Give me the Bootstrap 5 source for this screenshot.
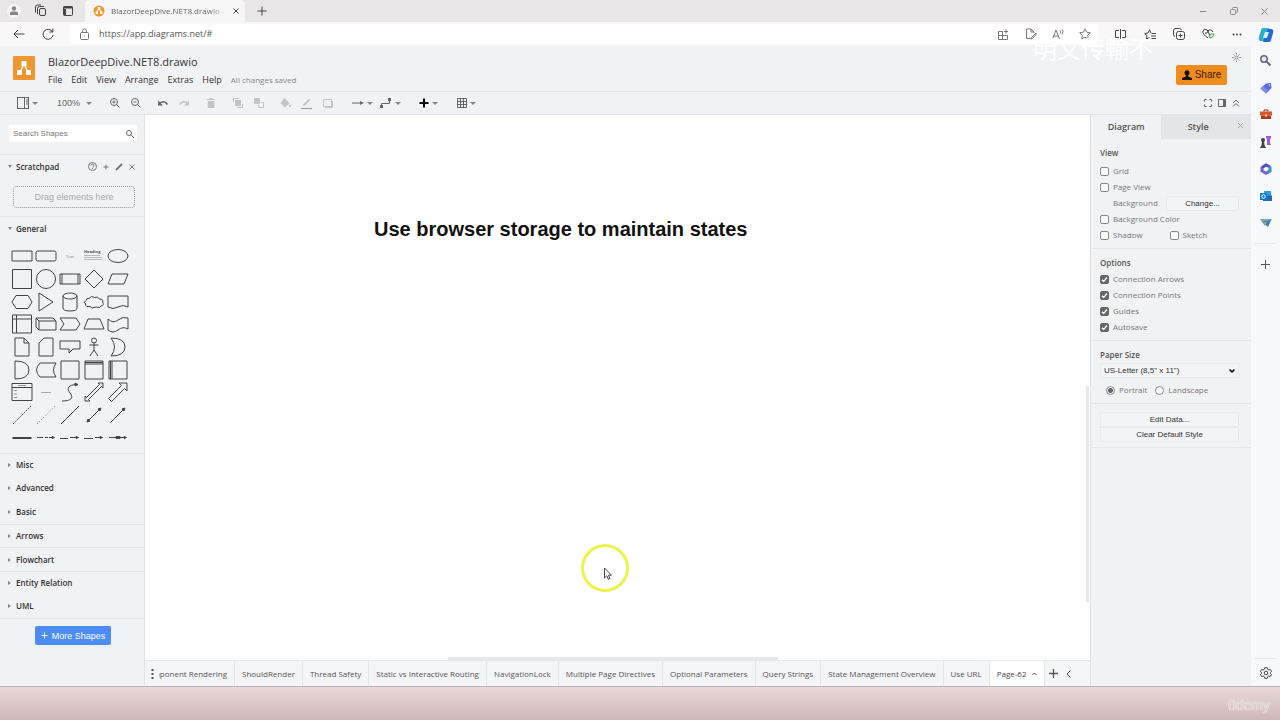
<!DOCTYPE html>
<html lang="en">
<head>
<meta charset="utf-8">
<meta name="viewport" content="width=device-width, initial-scale=1">
<title>BlazorDeepDive.NET8.drawio</title>
<link href="https://cdn.jsdelivr.net/npm/bootstrap@5.3.0/dist/css/bootstrap.min.css" rel="stylesheet">
<style>
  body { font-family: "Open Sans", "Noto Sans", sans-serif; font-size: 8px; line-height: 12px; color: #555; background: #f1f2f4; height: 100vh; overflow: hidden; }
  button, input, select { font: inherit; color: inherit; }
  button { background: none; border: 0; padding: 0; }
  a { color: inherit; text-decoration: none; }
  svg { display: block; flex: none; overflow: visible; }
  svg:not([fill]) { fill: none; }
  svg:not([stroke]) { stroke: currentColor; }
  .arial { font-family: "Liberation Sans", Arial, sans-serif; }
  .ico { display: flex; align-items: center; justify-content: center; flex: none; }
  .rule { border-top: 1px solid #e4e6e8; }
  .shrinkable { min-width: 0; min-height: 0; }

  /* browser chrome */
  .titlebar { height: 22px; background: #e9e6e7; color: #444; }
  .titlebar .ico { width: 27px; height: 22px; }
  .webtab { width: 160px; padding: 0 6px 0 8px; background: #f7f6f7; border-radius: 5px 5px 0 0; gap: 6px; }
  .webtab-name { overflow: hidden; white-space: nowrap; color: #666; -webkit-mask-image: linear-gradient(90deg, #000 85%, transparent); }
  .newtab { margin-left: 3px; }
  .winctl .ico { width: 31px; color: #888; }
  .addressbar { height: 24px; background: #f8f8f9; color: #444; }
  .addressbar .ico { width: 29px; }
  .urlbox { background: #fff; border-radius: 4px; height: 20px; padding-left: 10px; }
  .urlbox .ico { width: 27px; color: #777; }
  .urlbox input { border: 0; background: none; outline: 0; font-size: 9px; color: #555; padding: 0 0 0 10px; }
  .edgebar { width: 29px; background: #f7f8fa; }
  .edgebar .ico { height: 27px; }
  .edgebar .ico:first-child { height: 25px; }
  .edgebar hr { margin: 7px 4px; border-color: #aaa; }

  /* editor header */
  .apphead { padding: 7px 24px 0 13px; height: 45px; }
  .applogo { width: 22px; height: 24px; margin: 3px 13px 0 0; background: #ee962f; border-radius: 1px; }
  .docname { font-size: 11px; line-height: 17px; color: #333; }
  .menus { gap: 9px; font-size: 9px; line-height: 20px; color: #333; }
  .savedstate { font-size: 8px; color: #888; }
  .share { background: #f08c1e; color: #40200a; font-size: 10px; width: 51px; height: 20px; margin-top: 12px; border-radius: 2px; gap: 3px; }
  .daylight { margin: 0 -14px 0 5px; }
  .watermark { position: absolute; right: 98px; top: 16px; font: 24px/24px "Liberation Sans", "Noto Sans CJK SC", sans-serif; color: #fff; pointer-events: none; }
  .toolbar { height: 24px; padding: 0 8px 0 13px; gap: 6px; color: #666; border-bottom: 1px solid #e2e4e7; }
  .tool { width: 21px; height: 22px; }
  .tooldrop { width: 28px; height: 22px; gap: 3px; }
  .tool-narrow { width: 14px; }
  .zoomlevel { margin: 0 6px 0 10px; gap: 6px; font-size: 9px; }
  .off { color: #c4c4c6; }
  .caret { width: 0; border: 3px solid transparent; border-top-color: #888; border-bottom: 0; }

  /* shapes sidebar */
  .shapes { width: 145px; border-right: 1px solid #e2e4e7; color: #333; }
  .searchbox { margin: 10px 7px 12px 9px; height: 17px; background: #fff; border-radius: 2px; padding: 0 3px 0 4px; }
  .searchbox input { border: 0; outline: 0; background: none; width: 100px; padding: 0; }
  .searchbox input::placeholder { color: #777; opacity: 1; }
  .sect { height: 24px; padding: 0 6px 0 8px; font-weight: 600; gap: 3px; color: #333; }
  .sect .ico { width: 13px; color: #777; }
  .tri-down, .tri-right { width: 5px; flex: none; }
  .tri-down::before { content: ""; display: block; border: 2px solid transparent; border-top: 3px solid #888; border-bottom: 0; width: 0; }
  .tri-right::before { content: ""; display: block; border: 2px solid transparent; border-left: 3px solid #888; border-right: 0; width: 0; }
  .dropzone { margin: 8px 9px 8px 13px; height: 22px; border: 1px dotted #999; border-radius: 4px; color: #aaa; font-size: 9px; }
  .palette { display: grid; grid-template-columns: repeat(5, 24px); grid-template-rows: repeat(9, 1fr); height: 204px; margin: 5px 0 4px 10px; color: #444; }
  .cats { display: grid; grid-template-rows: repeat(7, 1fr); height: 165px; }
  .more { background: #4d8bf5; color: #fff; font-size: 9px; width: 76px; height: 19px; border-radius: 2px; margin: 7px 0 0 35px; }

  /* drawing canvas */
  .drawing { background: #fff; }
  .headline { position: absolute; left: 229px; top: 102px; font-size: 20px; line-height: 24px; font-weight: 700; color: #111; white-space: nowrap; }
  .pointer { position: absolute; left: 435px; top: 428px; }
  .vbar { position: absolute; right: 1px; top: 271px; width: 3px; height: 216px; background: #e6e7e9; }
  .hbar { position: absolute; left: 303px; bottom: 0; width: 330px; height: 3px; background: #e6e7e9; }
  .pages { height: 26px; border-top: 1px solid #e6e8ea; background: #f4f5f6; color: #555; }
  .pagetab { padding: 0 7px; border-right: 1px solid #e3e5e7; white-space: nowrap; height: 25px; flex: none; display: flex; align-items: center; }
  .pagetab-cut { width: 76px; padding-left: 0; margin-left: 3px; }
  .pagetab-cut span { overflow: hidden; display: flex; justify-content: flex-end; }
  .pagetab-on { background: #fff; gap: 5px; color: #444; }

  /* format panel */
  .format { width: 161px; border-left: 1px solid #dfe1e4; color: #777; }
  .ftab { height: 24px; font-size: 9px; font-weight: 600; color: #555; }
  .ftab-on { width: 44%; }
  .ftab-off { background: #e4e5e7; }
  .fsec { padding: 6px 12px 5px 9px; border-bottom: 1px solid #e4e6e8; }
  .fsec-actions { padding-top: 8px; }
  .fsec h2 { font-size: 8px; line-height: 16px; font-weight: 600; margin: 0; color: #555; }
  .fsec .viewhead { margin-bottom: 2px; }
  .frow { height: 16px; gap: 4px; }
  .frow label { line-height: 16px; }
  .indent { padding-left: 13px; }
  .orient { margin-top: 4px; padding-left: 6px; }
  .frow input[type=checkbox] { appearance: none; width: 9px; height: 9px; border: 1px solid #888; border-radius: 2px; background: #fff; margin: 0; }
  .frow input[type=checkbox]:checked { border-color: #666; background: #666 url("data:image/svg+xml,%3Csvg xmlns='http://www.w3.org/2000/svg' viewBox='0 0 8 8'%3E%3Cpath d='M1.5 4.2 3.2 6 6.5 2' fill='none' stroke='white' stroke-width='1.3'/%3E%3C/svg%3E") center/8px; }
  .frow input[type=radio] { appearance: none; width: 9px; height: 9px; border: 1px solid #888; border-radius: 50%; background: #fff; margin: 0; }
  .frow input[type=radio]:checked { background: radial-gradient(circle, #666 2px, #fff 3px); }
  .fbtn { border: 1px solid #e9eaec; height: 15px; line-height: 13px; color: #333; background: #f3f4f5; }
  .fbtn-small { width: 73px; }
  .paper { appearance: none; border: 1px solid #e9eaec; background: #f3f4f5 url("data:image/svg+xml,%3Csvg xmlns='http://www.w3.org/2000/svg' viewBox='0 0 8 8'%3E%3Cpath d='M1.5 2.5 4 5 6.500 2.500' fill='none' stroke='black' stroke-width='1.500'/%3E%3C/svg%3E") no-repeat right 2px center/8px; height: 15px; padding: 0 3px; color: #333; display: block; }

  .desk { height: 34px; border-top: 1px solid #b9b3bb; background: linear-gradient(#ead9d9, #cdb8b7); padding: 4px 10px 0; }
  .brand { font: 400 14px/28px "Liberation Sans", Arial, sans-serif; color: #dccaca; text-shadow: 0 0 1px #fff, 0 0 1px #fff; }
</style>
</head>
<body class="d-flex flex-column">

<header class="titlebar d-flex">
  <button class="ico" aria-label="Profile"><svg width="12" height="12" stroke="none"><circle cx="6" cy="6" r="7" fill="#f6f6f6"/><circle cx="6" cy="3.500" r="2.200" fill="#888"/><path d="M2 10V8.500q0-2 2-2h4q2 0 2 2V10z" fill="#888"/></svg></button>
  <button class="ico" aria-label="Workspaces"><svg width="12" height="12"><rect x="4.500" y="3.500" width="6" height="7" rx="1.500"/><path d="M2.500 9V3.500Q2.500 1.500 4.500 1.500H9M.5 7.500V2Q.5 0 2.500 0H6"/></svg></button>
  <button class="ico" aria-label="Tab actions"><svg width="10" height="10"><rect x=".5" y=".5" width="9" height="9" rx="1"/><path d="M.5 1.500h9M2 3v6" stroke-width="2"/></svg></button>
  <div class="webtab d-flex align-items-center ms-1">
    <svg width="12" height="12" stroke="none"><circle cx="6" cy="6" r="5.500" fill="#ee962f"/><path d="M6 3 3.500 8M6 3l2.500 5" stroke="#fff"/><path d="M4.700 2h2.600v2.500H4.700zM2.500 6.500H5V9H2.500zM7 6.500h2.500V9H7z" fill="#fff"/></svg>
    <span class="webtab-name flex-fill">BlazorDeepDive.NET8.drawio - draw.io</span>
    <button aria-label="Close tab"><svg width="6" height="6"><path d="m.5.500 5 5m0-5-5 5"/></svg></button>
  </div>
  <button class="ico newtab" aria-label="New tab"><svg width="10" height="10"><path d="M5 .5v9M.5 5h9"/></svg></button>
  <div class="winctl d-flex ms-auto">
    <button class="ico" aria-label="Minimize"><svg width="8" height="8"><path d="M1 4.500h6"/></svg></button>
    <button class="ico" aria-label="Restore"><svg width="8" height="8"><rect x=".5" y="2.500" width="5" height="5" rx="1"/><path d="M2.500 1.500q0-1 1-1h3q1 0 1 1v3q0 1-1 1"/></svg></button>
    <button class="ico" aria-label="Close window"><svg width="7" height="7"><path d="m.5.500 6 6m0-6-6 6"/></svg></button>
  </div>
</header>

<div class="d-flex flex-fill shrinkable">
<div class="d-flex flex-column flex-fill position-relative shrinkable">

  <div class="addressbar d-flex align-items-center ps-1">
    <button class="ico" aria-label="Back"><svg width="12" height="10"><path d="M11.500 5H1M5 1 1 5l4 4"/></svg></button>
    <button class="ico" aria-label="Refresh"><svg width="12" height="12"><path d="M10.500 4A5 5 0 1 0 11 7M10.800.500V4H7.300"/></svg></button>
    <div class="urlbox d-flex align-items-center flex-fill ms-2">
      <svg width="9" height="11" color="#777"><rect x=".5" y="3.500" width="8" height="7" rx="1"/><path d="M2.500 3.500V2a2 2 0 0 1 4 0v1.500M4.500 6.500v1"/></svg>
      <input class="flex-fill" aria-label="Address" value="https://app.diagrams.net/#">
      <button class="ico" aria-label="Apps"><svg width="11" height="11"><path d="M.5 2.500h4v8h-4zM.5 6.500h9v4h-5v-8M8 .5v4M6 2.500h4"/></svg></button>
      <button class="ico" aria-label="Edit page"><svg width="12" height="12"><path d="M5 10.500H1.500V1H6l3 3v1M6 1v3h3M11 5l-4 4-1.500 2 2-.5L11.500 6z"/></svg></button>
      <button class="ico" aria-label="Read aloud"><svg width="12" height="11"><path d="M.5 10 4 1l3.500 9M2 7h4M8 1.500q1.500 1 0 3M10 .5q2 2 0 5"/></svg></button>
      <button class="ico" aria-label="Favourite"><svg width="12" height="12"><path d="m6 .8 1.600 3.400 3.700.5-2.700 2.600.7 3.700L6 9.200 2.700 11l.7-3.700L.7 4.700l3.700-.5z"/></svg></button>
    </div>
    <div class="d-flex ps-2">
      <button class="ico" aria-label="Split screen"><svg width="11" height="10"><path d="M4 1.500H.5v7H4M7 1.500h3.500v7H7M5.500 0v10"/></svg></button>
      <button class="ico" aria-label="Favourites"><svg width="12" height="11"><path d="M7 4 5.500.8 4 4 .7 4.500 3 6.700 2.500 10l3-1.500M7.500 4.500H12M7 7h5M7.500 9.500H12"/></svg></button>
      <button class="ico" aria-label="Collections"><svg width="12" height="12"><rect x="3.500" y="3.500" width="8" height="8" rx="2"/><path d="M7.500 5.500v4M5.500 7.500h4M2 8.500Q.5 8 .5 6.500V2.500q0-2 2-2h4q1.500 0 2 1.500"/></svg></button>
      <button class="ico" aria-label="Performance"><svg width="12" height="12"><path d="M6 10Q0 6 1 3t4-1l1 1 1-1q3-1 4 2M3 5h2l1-2 2 5"/><path d="M7 8q2-3 5-2-1 4-4 4z" stroke="#3a9a4a"/></svg></button>
      <button class="ico" aria-label="Settings and more"><svg width="10" height="3" stroke="none" fill="#444"><circle cx="1.500" cy="1.500" r="1"/><circle cx="5" cy="1.500" r="1"/><circle cx="8.500" cy="1.500" r="1"/></svg></button>
    </div>
  </div>

  <div class="apphead d-flex">
    <div class="applogo ico"><svg width="18" height="18" stroke="#fff" stroke-width="1.500"><path d="M9 5 5 13M9 5l4 8"/><path d="M6.500 2h5v5h-5zM2 11h5v5H2zM11 11h5v5h-5z" fill="#fff" stroke="none"/></svg></div>
    <div>
      <div class="docname">BlazorDeepDive.NET8.drawio</div>
      <nav class="menus d-flex">
        <a href="#">File</a><a href="#">Edit</a><a href="#">View</a><a href="#">Arrange</a><a href="#">Extras</a><a href="#">Help</a><span class="savedstate">All changes saved</span>
      </nav>
    </div>
    <button class="share arial ico ms-auto"><svg width="10" height="10" stroke="none" fill="#111"><circle cx="5" cy="2.800" r="2.500"/><path d="M3.800 4.500h2.400v2L10 8v2H0V8l3.800-1.500z"/></svg>Share</button>
    <svg class="daylight" width="9" height="9" stroke="#888"><circle cx="4.500" cy="4.500" r="1.500"/><path d="M4.500 0v1.500M4.500 7.500V9M0 4.500h1.500M7.500 4.500H9M1.500 1.500l1 1M6.500 6.500l1 1M7.500 1.500l-1 1M2.500 6.500l-1 1"/></svg>
  </div>
  <div class="watermark">明文传輸不</div>

  <div class="toolbar d-flex align-items-center rule">
    <button class="tooldrop ico" aria-label="View"><svg width="12" height="12"><rect x=".5" y=".5" width="11" height="11"/><path d="M7.500 1v10M9 3h2M9 5h2M9 7h2"/></svg><i class="caret"></i></button>
    <button class="zoomlevel arial ico">100%<i class="caret"></i></button>
    <div class="d-flex">
      <button class="tool ico" aria-label="Zoom in"><svg width="10" height="10"><circle cx="4" cy="4" r="3.500"/><path d="m6.500 6.500 3 3M4 2.500v3M2.500 4h3"/></svg></button>
      <button class="tool ico" aria-label="Zoom out"><svg width="10" height="10"><circle cx="4" cy="4" r="3.500"/><path d="m6.500 6.500 3 3M2.500 4h3"/></svg></button>
    </div>
    <div class="d-flex">
      <button class="tool ico" aria-label="Undo"><svg width="10" height="8"><path d="M1.500 4.500Q6 .5 9.500 5.500" stroke-width="1.500"/><path d="M0 1.500v5h5z" fill="currentColor" stroke="none"/></svg></button>
      <button class="tool ico off" aria-label="Redo"><svg width="10" height="8"><path d="M8.500 4.500Q4 .5.500 5.500" stroke-width="1.500"/><path d="M10 1.500v5H5z" fill="currentColor" stroke="none"/></svg></button>
    </div>
    <button class="tool ico off" aria-label="Delete"><svg width="8" height="10" fill="currentColor" stroke="none"><path d="M0 1h2.500V0h3v1H8v1H0zM.700 3h6.600v7H.700z"/></svg></button>
    <div class="d-flex">
      <button class="tool ico off" aria-label="To front"><svg width="10" height="10"><path d="M.500 4V.500H6M9.500 6v3.500H4"/><path d="M2 2h6v6H2z" fill="currentColor" stroke="none"/></svg></button>
      <button class="tool ico off" aria-label="To back"><svg width="10" height="10"><path d="M.500.500h5v5h-5z" fill="currentColor"/><path d="M7 4.500h2.500v5h-5V7"/></svg></button>
    </div>
    <div class="d-flex">
      <button class="tool ico off" aria-label="Fill colour"><svg width="11" height="10" fill="currentColor" stroke="none"><path d="m4.500 0 5 5-4.500 4.500L.500 5zM10 6q2 3 0 3t0-3z"/></svg></button>
      <button class="tool ico off" aria-label="Line colour"><svg width="11" height="11"><path d="m2.500 7.500 6-6" stroke-width="2"/><path d="M0 10.500h11" stroke="#999"/></svg></button>
      <button class="tool ico off" aria-label="Shadow"><svg width="10" height="9"><path d="M.5.500h8v7h-8zM9.500 2v6.500H2"/></svg></button>
    </div>
    <div class="d-flex ms-1">
      <button class="tooldrop ico" aria-label="Connection"><svg width="12" height="6"><path d="M0 3h9"/><path d="M8 1 12 3 8 5z" fill="currentColor" stroke="none"/></svg><i class="caret"></i></button>
      <button class="tooldrop ico" aria-label="Waypoints"><svg width="12" height="10"><path d="M1.500 9V5.500h8V2"/><path d="M0 7h3v3H0zM8 0h3v3H8z" fill="currentColor" stroke="none"/></svg><i class="caret"></i></button>
    </div>
    <button class="tooldrop ico ms-1 text-black" aria-label="Insert"><svg width="10" height="10" stroke-width="2"><path d="M5 .5v9M.5 5h9"/></svg><i class="caret"></i></button>
    <button class="tooldrop ico ms-1" aria-label="Table"><svg width="10" height="10"><path d="M.5.500h9v9h-9zM3.500.500v9M6.500.500v9M.5 3.500h9M.5 6.500h9"/></svg><i class="caret"></i></button>
    <div class="d-flex ms-auto">
      <button class="tool-narrow ico" aria-label="Fullscreen"><svg width="8" height="8"><path d="M.5 2.500v-2h2M5.500.500h2v2M7.500 5.500v2h-2M2.500 7.500h-2v-2"/></svg></button>
      <button class="tool-narrow ico" aria-label="Format"><svg width="8" height="8"><path d="M.5.500h7v7h-7zM5.500 1v6M6.500 1v6"/></svg></button>
      <button class="tool-narrow ico" aria-label="Collapse"><svg width="8" height="8"><path d="M1 4l3-3 3 3M1 7.500l3-3 3 3"/></svg></button>
    </div>
  </div>

  <div class="d-flex flex-fill shrinkable">
    <aside class="shapes flex-shrink-0">
      <div class="searchbox d-flex align-items-center justify-content-between arial">
        <input type="text" placeholder="Search Shapes" aria-label="Search Shapes">
        <svg width="8" height="8" stroke="#666"><circle cx="3" cy="3" r="2.500"/><path d="m5 5 3 3"/></svg>
      </div>
      <div class="sect rule d-flex align-items-center"><span class="tri-down"></span><span class="me-auto">Scratchpad</span>
        <div class="d-flex">
        <button class="ico" aria-label="Help"><svg width="9" height="9"><circle cx="4.500" cy="4.500" r="4"/><path d="M3 3.500q0-1.300 1.500-1.300T6 3.500 4.500 5M4.500 6v1"/></svg></button>
        <button class="ico" aria-label="Add"><svg width="6" height="6"><path d="M3 .5v5M.5 3h5"/></svg></button>
        <button class="ico" aria-label="Edit"><svg width="8" height="8"><path d="m1 7 6-6" stroke-width="2"/></svg></button>
        <button class="ico" aria-label="Close"><svg width="6" height="6"><path d="m.5.500 5 5m0-5-5 5"/></svg></button>
        </div>
      </div>
      <div class="dropzone ico arial">Drag elements here</div>
      <div class="sect rule d-flex align-items-center"><span class="tri-down"></span>General</div>
      <div class="palette">
        <button class="ico" aria-label="Rectangle"><svg width="22" height="22"><path d="M1 6h20v10H1z"/></svg></button>
        <button class="ico" aria-label="Rounded rectangle"><svg width="22" height="22"><rect x="1" y="6" width="20" height="10" rx="1.500"/></svg></button>
        <button class="ico" aria-label="Text"><svg width="22" height="22"><text x="11" y="13" font-size="4" text-anchor="middle" fill="#777" stroke="none">Text</text></svg></button>
        <button class="ico" aria-label="Textbox"><svg width="22" height="22" stroke="#bbb"><text x="1" y="8" font-size="4" font-weight="700" fill="#555" stroke="none">Heading</text><path d="M1 10.500h16M1 12.500h18M1 14.500h18"/></svg></button>
        <button class="ico" aria-label="Ellipse"><svg width="22" height="22"><ellipse cx="11" cy="11" rx="10" ry="6.500"/></svg></button>

        <button class="ico" aria-label="Square"><svg width="22" height="22"><path d="M1.500 1.500h19v19h-19z"/></svg></button>
        <button class="ico" aria-label="Circle"><svg width="22" height="22"><circle cx="11" cy="11" r="9.500"/></svg></button>
        <button class="ico" aria-label="Process"><svg width="22" height="22"><path d="M1 6h20v10H1zM3 6v10M19 6v10"/></svg></button>
        <button class="ico" aria-label="Diamond"><svg width="22" height="22"><path d="m11 2 9 9-9 9-9-9z"/></svg></button>
        <button class="ico" aria-label="Parallelogram"><svg width="22" height="22"><path d="M5 6h16l-4 10H1z"/></svg></button>

        <button class="ico" aria-label="Hexagon"><svg width="22" height="22"><path d="M5 4.500h12L21 11l-4 6.500H5L1 11z"/></svg></button>
        <button class="ico" aria-label="Triangle"><svg width="22" height="22"><path d="M4 2v18l14-9z"/></svg></button>
        <button class="ico" aria-label="Cylinder"><svg width="22" height="22"><path d="M4 5v12q0 3 7 3t7-3V5"/><ellipse cx="11" cy="5" rx="7" ry="3"/></svg></button>
        <button class="ico" aria-label="Cloud"><svg width="22" height="22"><path d="M6 7.500Q3 7 3 9.500 0 11 2.500 13q0 3 4.500 2.500 2 2.500 6 .5 4 1.500 5-1 4-1 1.500-4 1-3-3-3-2-3-5-1.500Q8 4 6 7.500z"/></svg></button>
        <button class="ico" aria-label="Document"><svg width="22" height="22"><path d="M1 5h20v11q-5-3-10 0t-10 0z"/></svg></button>

        <button class="ico" aria-label="Internal storage"><svg width="22" height="22"><path d="M1.500 2h19v18h-19zM5.500 2v18M1.500 6h19"/></svg></button>
        <button class="ico" aria-label="Cube"><svg width="22" height="22"><path d="M1 5h17l3 3v9H4l-3-3zM1 5l3 3v9M4 8h17"/></svg></button>
        <button class="ico" aria-label="Step"><svg width="22" height="22"><path d="M1 5h16l4 6-4 6H1l4-6z"/></svg></button>
        <button class="ico" aria-label="Trapezoid"><svg width="22" height="22"><path d="M5 6h12l4 10H1z"/></svg></button>
        <button class="ico" aria-label="Tape"><svg width="22" height="22"><path d="M1 6q5 5 10 1t10-2v11q-5-3-10 1T1 17z"/></svg></button>

        <button class="ico" aria-label="Note"><svg width="22" height="22"><path d="M4 2h9l5 5v13H4zM13 2v5h5"/></svg></button>
        <button class="ico" aria-label="Card"><svg width="22" height="22"><path d="M9 2h9v18H4V7z"/></svg></button>
        <button class="ico" aria-label="Callout"><svg width="22" height="22"><path d="M1 5h20v8h-7l-4 4v-4H1z"/></svg></button>
        <button class="ico" aria-label="Actor"><svg width="22" height="22"><circle cx="11" cy="4.500" r="2.500"/><path d="M11 7v7M6.500 9h9M11 14l-4 6M11 14l4 6"/></svg></button>
        <button class="ico" aria-label="Or"><svg width="22" height="22"><path d="M4 2q14 0 14 9T4 20q7-9 0-18z"/></svg></button>

        <button class="ico" aria-label="And"><svg width="22" height="22"><path d="M4 2q14 0 14 9T4 20z"/></svg></button>
        <button class="ico" aria-label="Data storage"><svg width="22" height="22"><path d="M5 4h16q-5 7 0 14H5q-7-7 0-14z"/></svg></button>
        <button class="ico" aria-label="Container"><svg width="22" height="22"><path d="M2 2h18v18H2z"/></svg></button>
        <button class="ico" aria-label="Titled container"><svg width="22" height="22"><path d="M2 2h18v18H2zM2 5h18M2 3.500h18"/></svg></button>
        <button class="ico" aria-label="Side container"><svg width="22" height="22"><path d="M2 2h18v18H2zM5 2v18M3.500 2v18"/></svg></button>

        <button class="ico" aria-label="List"><svg width="22" height="22"><path d="M1 2.500h20v17H1zM1 6.500h20"/><path d="M3 9.500h3M3 13h3M3 16.500h3M7 4.500h8" stroke="#999"/></svg></button>
        <button class="ico" aria-label="List item"><svg width="22" height="22"><path d="M6 11.500h10" stroke="#aaa"/></svg></button>
        <button class="ico" aria-label="Curve"><svg width="22" height="22"><path d="M3 20c9 0 12-3 8-8S10 4 17 3.500"/><path d="m16 2 3 1.500-3 1.500z" fill="currentColor"/></svg></button>
        <button class="ico" aria-label="Double arrow"><svg width="22" height="22"><path d="M20 2v5l-1.500-1.500-13 13L7 20H2v-5l1.500 1.500 13-13L15 2z"/></svg></button>
        <button class="ico" aria-label="Arrow"><svg width="22" height="22"><path d="M20 2v8l-2.500-2.500-13 13-3-3 13-13L12 2z"/></svg></button>

        <button class="ico" aria-label="Dashed line"><svg width="22" height="22" stroke="#666" stroke-dasharray="2 1"><path d="m2 20 18-18"/></svg></button>
        <button class="ico" aria-label="Dotted line"><svg width="22" height="22" stroke="#777" stroke-dasharray="1 2"><path d="m2 20 18-18"/></svg></button>
        <button class="ico" aria-label="Line"><svg width="22" height="22"><path d="m2 20 18-18"/></svg></button>
        <button class="ico" aria-label="Two-way connector"><svg width="22" height="22"><path d="M5 17 17 5"/><path d="m18 4-1 3-2-2zM4 18l1-3 2 2z" fill="currentColor"/></svg></button>
        <button class="ico" aria-label="Connector"><svg width="22" height="22"><path d="M3.500 18.500 17 5"/><path d="m18 4-1 3-2-2z" fill="currentColor"/></svg></button>

        <button class="ico" aria-label="Link"><svg width="22" height="22"><path d="M1.500 11h19" stroke-width="2"/></svg></button>
        <button class="ico" aria-label="Labelled connector"><svg width="22" height="22"><path d="M2 10.500h6M10 10.500h3M14 10.500h4"/><path d="m17 9.500 2.500 1-2.500 1z" fill="currentColor"/></svg></button>
        <button class="ico" aria-label="Connector with two labels"><svg width="22" height="22"><path d="M1 11.500h8M11 10.500h7"/><path d="m17 9.500 2.500 1-2.500 1z" fill="currentColor"/></svg></button>
        <button class="ico" aria-label="Connector with three labels"><svg width="22" height="22"><path d="M1 11.500h9M12 10.500h6"/><path d="m17 9.500 2.500 1-2.500 1z" fill="currentColor"/></svg></button>
        <button class="ico" aria-label="Connector with symbol"><svg width="22" height="22"><path d="M2 10.500h16M9 9.500h4v2H9z"/><path d="m17 9.500 2.500 1-2.500 1z" fill="currentColor"/></svg></button>
      </div>
      <div class="cats">
        <a href="#" class="sect rule d-flex align-items-center h-auto"><span class="tri-right"></span>Misc</a>
        <a href="#" class="sect d-flex align-items-center h-auto"><span class="tri-right"></span>Advanced</a>
        <a href="#" class="sect d-flex align-items-center h-auto"><span class="tri-right"></span>Basic</a>
        <a href="#" class="sect rule d-flex align-items-center h-auto"><span class="tri-right"></span>Arrows</a>
        <a href="#" class="sect rule d-flex align-items-center h-auto"><span class="tri-right"></span>Flowchart</a>
        <a href="#" class="sect rule d-flex align-items-center h-auto"><span class="tri-right"></span>Entity Relation</a>
        <a href="#" class="sect d-flex align-items-center h-auto"><span class="tri-right"></span>UML</a>
      </div>
      <div class="rule"><button class="more ico arial gap-1"><svg width="7" height="7"><path d="M3.500.500v6M.5 3.500h6"/></svg>More Shapes</button></div>
    </aside>

    <main class="d-flex flex-column flex-fill shrinkable">
      <div class="drawing flex-fill position-relative overflow-hidden">
        <div class="headline arial">Use browser storage to maintain states</div>
        <svg class="pointer" width="50" height="50"><circle cx="25" cy="25" r="22.500" stroke="#ecf24e" stroke-width="3"/><path d="M24.500 25v10l2.300-2.200 1.600 3.500 1.600-.8-1.600-3.300h3z" fill="#fff" stroke="#444"/></svg>
        <div class="vbar"></div><div class="hbar"></div>
      </div>
      <nav class="pages d-flex align-items-center">
        <button class="ico ps-1" aria-label="Pages"><svg width="7" height="12" fill="#555" stroke="none"><path d="M2.500 1h2v2h-2zM2.500 5h2v2h-2zM2.500 9h2v2h-2z"/></svg></button>
        <a href="#" class="pagetab pagetab-cut"><span>Component Rendering</span></a>
        <a href="#" class="pagetab">ShouldRender</a>
        <a href="#" class="pagetab">Thread Safety</a>
        <a href="#" class="pagetab">Static vs Interactive Routing</a>
        <a href="#" class="pagetab">NavigationLock</a>
        <a href="#" class="pagetab">Multiple Page Directives</a>
        <a href="#" class="pagetab">Optional Parameters</a>
        <a href="#" class="pagetab">Query Strings</a>
        <a href="#" class="pagetab">State Management Overview</a>
        <a href="#" class="pagetab">Use URL</a>
        <a href="#" class="pagetab pagetab-on">Page-62 <svg width="5" height="4"><path d="m.5 3 2-2 2 2"/></svg></a>
        <button class="ico px-1" aria-label="Insert page"><svg width="9" height="9"><path d="M4.500 0v9M0 4.500h9" stroke-width="1.300"/></svg></button>
        <button class="ico px-1" aria-label="Scroll pages"><svg width="5" height="8"><path d="M4.500.500 1 4l3.500 3.500"/></svg></button>
      </nav>
    </main>

    <aside class="format flex-shrink-0">
      <div class="d-flex position-relative">
        <button class="ftab ftab-on">Diagram</button>
        <button class="ftab ftab-off flex-fill pe-3">Style</button>
        <button class="position-absolute end-0 top-0 mt-2 me-2" aria-label="Close panel"><svg width="5" height="5" stroke="#aaa"><path d="m0 0 5 5m0-5-5 5"/></svg></button>
      </div>
      <section class="fsec">
        <h2 class="viewhead">View</h2>
        <div class="frow d-flex align-items-center"><input type="checkbox" id="grid"><label for="grid">Grid</label></div>
        <div class="frow d-flex align-items-center"><input type="checkbox" id="pv"><label for="pv">Page View</label></div>
        <div class="frow d-flex align-items-center justify-content-between"><span class="indent">Background</span><button class="fbtn fbtn-small arial">Change...</button></div>
        <div class="frow d-flex align-items-center"><input type="checkbox" id="bc"><label for="bc">Background Color</label></div>
        <div class="d-flex">
          <div class="frow d-flex align-items-center w-50"><input type="checkbox" id="sh"><label for="sh">Shadow</label></div>
          <div class="frow d-flex align-items-center"><input type="checkbox" id="sk"><label for="sk">Sketch</label></div>
        </div>
      </section>
      <section class="fsec">
        <h2>Options</h2>
        <div class="frow d-flex align-items-center"><input type="checkbox" id="ca" checked><label for="ca">Connection Arrows</label></div>
        <div class="frow d-flex align-items-center"><input type="checkbox" id="cp" checked><label for="cp">Connection Points</label></div>
        <div class="frow d-flex align-items-center"><input type="checkbox" id="gd" checked><label for="gd">Guides</label></div>
        <div class="frow d-flex align-items-center"><input type="checkbox" id="as" checked><label for="as">Autosave</label></div>
      </section>
      <section class="fsec">
        <h2><label for="paper" class="d-block">Paper Size</label></h2>
        <select id="paper" class="paper arial w-100"><option>US-Letter (8,5" x 11")</option></select>
        <div class="frow orient d-flex align-items-center"><input type="radio" name="o" id="po" checked><label for="po">Portrait</label><input type="radio" name="o" id="la" class="ms-1"><label for="la">Landscape</label></div>
      </section>
      <section class="fsec fsec-actions">
        <button class="fbtn arial d-block w-100">Edit Data...</button>
        <button class="fbtn arial d-block w-100">Clear Default Style</button>
      </section>
    </aside>
  </div>
</div>

<aside class="edgebar d-flex flex-column flex-shrink-0 align-items-stretch">
  <button class="ico" aria-label="Copilot"><svg width="16" height="16" stroke="none"><path d="M5 1h6l-3 9-2 4H3Q0 14 1 10l2-7q.5-2 2-2z" fill="#2bb0c9"/><path d="M11 15H5l3-9 2-4h3q3 0 2 4l-2 7q-.5 2-2 2z" fill="#2469d8"/><path d="m7 5 4 0-2 6H5z" fill="#d9f0fa"/></svg></button>
  <button class="ico" aria-label="Search"><svg width="11" height="11" stroke="#667"><circle cx="4" cy="4" r="3.200" stroke-width="1.500" fill="#dfe8f0"/><path d="m6.500 6.500 4 4" stroke-width="2"/></svg></button>
  <button class="ico" aria-label="Shopping"><svg width="12" height="12" stroke="none"><path d="M6 1.500 11 1l.5 5L6 11.500.5 6.500z" fill="#5b6be0"/><path d="m6 11.500-5.500-5L3 4l6 5z" fill="#7d8cf0"/><circle cx="9.500" cy="3" r=".8" fill="#fff"/></svg></button>
  <button class="ico" aria-label="Tools"><svg width="12" height="11" stroke="none" fill="none"><path d="M4 2.500V1h4v1.500" stroke="#8a3418"/><path d="M0 2.500h12v4H0z" fill="#d3572f"/><path d="M1 6.500h10V10H1z" fill="#a93a1c"/><path d="M5 5.500h2v2H5z" fill="#f5d28c"/></svg></button>
  <button class="ico" aria-label="Games"><svg width="13" height="12" stroke="none"><path d="M7 0h5v2l-1 1v4l1 2H8V3L7 2z" fill="#a25be0"/><circle cx="4" cy="4" r="2" fill="#444"/><path d="M3 5h2l.5 4L7 12H1l1.500-3z" fill="#444"/></svg></button>
  <button class="ico" aria-label="Microsoft 365"><svg width="12" height="12" stroke-width="3"><path d="M10 8 6 10.300 2 8V4" stroke="#7a63d8"/><path d="M2 4.500 6 2l4 2" stroke="#5848b8"/><path d="M10 3.500V8L7.500 9.500" stroke="#3c8fe0"/></svg></button>
  <button class="ico" aria-label="Outlook"><svg width="12" height="12" stroke="none"><path d="M4 1h7v6H4z" fill="#2d9be0"/><path d="m3 6 9-.5V11H3z" fill="#1a6bc0"/><path d="M0 3h7v7H0z" fill="#1478c8"/><circle cx="3.500" cy="6.500" r="1.800" stroke="#fff"/></svg></button>
  <button class="ico" aria-label="Drop"><svg width="12" height="10" stroke="none"><path d="M0 1h12l-2 3H2z" fill="#6fa8c8"/><path d="m2 4 6 5L11 2z" fill="#3f78b8"/><path d="M2 4h5L5 8z" fill="#8fae5a"/></svg></button>
  <hr>
  <button class="ico" aria-label="Add app"><svg width="9" height="9" stroke="#555"><path d="M4.500 0v9M0 4.500h9"/></svg></button>
  <hr class="mt-auto mb-0">
  <button class="ico" aria-label="Settings"><svg width="12" height="12" stroke="#444"><circle cx="6" cy="6" r="1.800"/><path d="M4.800.7h2.400l.4 1.600 1.200.7 1.600-.5 1.100 2L10.400 5.500v1l1.100 1-1.100 2-1.600-.5-1.200.7-.4 1.600H4.800l-.4-1.600-1.200-.7-1.600.5-1.100-2 1.100-1v-1L.5 4.500l1.100-2 1.600.5 1.200-.7z"/></svg></button>
</aside>
</div>

<footer class="desk d-flex justify-content-end"><span class="brand">ûdemy</span></footer>
<script src="https://cdn.jsdelivr.net/npm/bootstrap@5.3.0/dist/js/bootstrap.bundle.min.js"></script>
</body>
</html>
